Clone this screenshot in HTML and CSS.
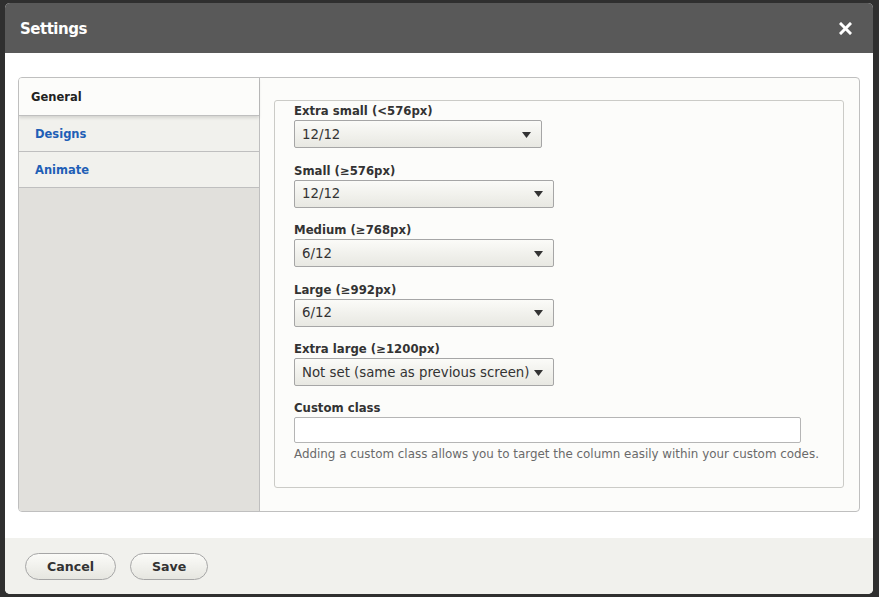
FILE: index.html
```html
<!DOCTYPE html>
<html lang="en">
<head>
<meta charset="utf-8">
<title>Settings</title>
<link rel="stylesheet" href="styles.css">
</head>
<body>
<div class="dialog">
  <div class="titlebar">
    <span class="title">Settings</span>
    <span class="close" aria-label="Close">
      <svg width="13" height="13" viewBox="0 0 13 13"><path d="M2 2 L11 11 M11 2 L2 11" stroke="#fff" stroke-width="3" stroke-linecap="square"/></svg>
    </span>
  </div>
  <div class="content">
    <div class="vtabs">
      <ul class="vtabs-menu">
        <li class="tab active">General</li>
        <li class="tab">Designs</li>
        <li class="tab">Animate</li>
      </ul>
      <div class="vtabs-pane">
        <div class="fieldset">
          <div class="item">
            <div class="label">Extra small (&lt;576px)</div>
            <div class="select narrow"><span>12/12</span><svg class="arrow" width="9" height="6" viewBox="0 0 9 6"><path d="M0 0 H9 L4.5 6 Z" fill="#333"/></svg></div>
          </div>
          <div class="item">
            <div class="label">Small (≥576px)</div>
            <div class="select"><span>12/12</span><svg class="arrow" width="9" height="6" viewBox="0 0 9 6"><path d="M0 0 H9 L4.5 6 Z" fill="#333"/></svg></div>
          </div>
          <div class="item">
            <div class="label">Medium (≥768px)</div>
            <div class="select"><span>6/12</span><svg class="arrow" width="9" height="6" viewBox="0 0 9 6"><path d="M0 0 H9 L4.5 6 Z" fill="#333"/></svg></div>
          </div>
          <div class="item">
            <div class="label">Large (≥992px)</div>
            <div class="select"><span>6/12</span><svg class="arrow" width="9" height="6" viewBox="0 0 9 6"><path d="M0 0 H9 L4.5 6 Z" fill="#333"/></svg></div>
          </div>
          <div class="item">
            <div class="label">Extra large (≥1200px)</div>
            <div class="select"><span>Not set (same as previous screen)</span><svg class="arrow" width="9" height="6" viewBox="0 0 9 6"><path d="M0 0 H9 L4.5 6 Z" fill="#333"/></svg></div>
          </div>
          <div class="item last">
            <div class="label">Custom class</div>
            <div class="input"></div>
            <div class="desc">Adding a custom class allows you to target the column easily within your custom codes.</div>
          </div>
        </div>
      </div>
    </div>
  </div>
  <div class="footer">
    <span class="btn">Cancel</span>
    <span class="btn">Save</span>
  </div>
</div>
</body>
</html>
```
FILE: styles.css
```css
html, body {
  margin: 0;
  padding: 0;
}
body {
  width: 879px;
  height: 597px;
  overflow: hidden;
  background: #2f2f2f;
  font-family: "DejaVu Sans", Verdana, sans-serif;
  color: #333;
}
.dialog {
  margin: 3px 0 0 5px;
  width: 868px;
  height: 591px;
  background: #fff;
  border-radius: 5px;
  overflow: hidden;
  display: flex;
  flex-direction: column;
}
.titlebar {
  height: 50px;
  flex: none;
  background: #595959;
  display: flex;
  align-items: center;
  justify-content: space-between;
  padding: 0 21px 0 15px;
}
.title {
  color: #fff;
  font-weight: bold;
  font-size: 15px;
  letter-spacing: -0.5px;
  margin-top: 1px;
}
.close {
  display: flex;
  width: 13px;
  height: 13px;
}
.content {
  flex: none;
  height: 435px;
  padding: 24px 13px 26px 13px;
  background: #fff;
}
.vtabs {
  height: 100%;
  box-sizing: border-box;
  border: 1px solid #bfbfbf;
  border-radius: 4px;
  background: #fcfcfa;
  display: flex;
  overflow: hidden;
}
.vtabs-menu {
  list-style: none;
  margin: 0;
  padding: 0;
  width: 240px;
  flex: none;
  background: #e1e0dc;
  border-right: 1px solid #bfbfbf;
}
.tab {
  height: 35px;
  box-sizing: content-box;
  border-bottom: 1px solid #bfbfbf;
  background: #f1f1ed;
  color: #1f5fb6;
  font-weight: bold;
  font-size: 11.5px;
  display: flex;
  align-items: center;
  padding-left: 16px;
}
.tab.active {
  height: 37px;
  background: #fcfcfa;
  color: #222;
  padding-left: 12px;
  box-shadow: 0 2px 3px rgba(0,0,0,0.12);
  position: relative;
}
.vtabs-pane {
  flex: 1;
  padding: 22px 15px 23px 14px;
}
.fieldset {
  height: 100%;
  box-sizing: border-box;
  border: 1px solid #cbcbc7;
  border-radius: 3px;
  padding: 2px 10px 0 19px;
}
.item {
  margin-bottom: 14.5px;
}
.label {
  font-weight: bold;
  font-size: 11.7px;
  line-height: 17px;
  height: 17px;
  color: #333;
}
.select {
  width: 260px;
  height: 28px;
  box-sizing: border-box;
  border: 1px solid #a6a6a6;
  border-radius: 2px;
  background: linear-gradient(#fbfbf8, #e8e8e2);
  display: flex;
  align-items: center;
  justify-content: space-between;
  padding: 0 10px 0 7px;
  font-size: 13.3px;
  color: #333;
}
.select.narrow {
  width: 248px;
}
.arrow {
  flex: none;
  margin-top: 1px;
}
.item.last .label {
  margin-top: -1px;
}
.input {
  width: 507px;
  height: 26px;
  box-sizing: border-box;
  border: 1px solid #b5b5b5;
  border-radius: 2px;
  background: #fff;
}
.desc {
  margin-top: 3px;
  font-size: 11.9px;
  color: #6a6a6a;
  line-height: 16px;
  white-space: nowrap;
}
.footer {
  flex: 1;
  background: #f1f1ed;
  display: flex;
  align-items: flex-start;
  gap: 14px;
  padding: 15px 0 0 20px;
}
.btn {
  height: 27px;
  box-sizing: border-box;
  border: 1px solid #a6a6a6;
  border-radius: 14px;
  background: linear-gradient(#fbfbf8, #e6e6e0);
  font-weight: bold;
  font-size: 12.6px;
  color: #333;
  display: flex;
  align-items: center;
  justify-content: center;
  padding: 0 21px;
}
```
